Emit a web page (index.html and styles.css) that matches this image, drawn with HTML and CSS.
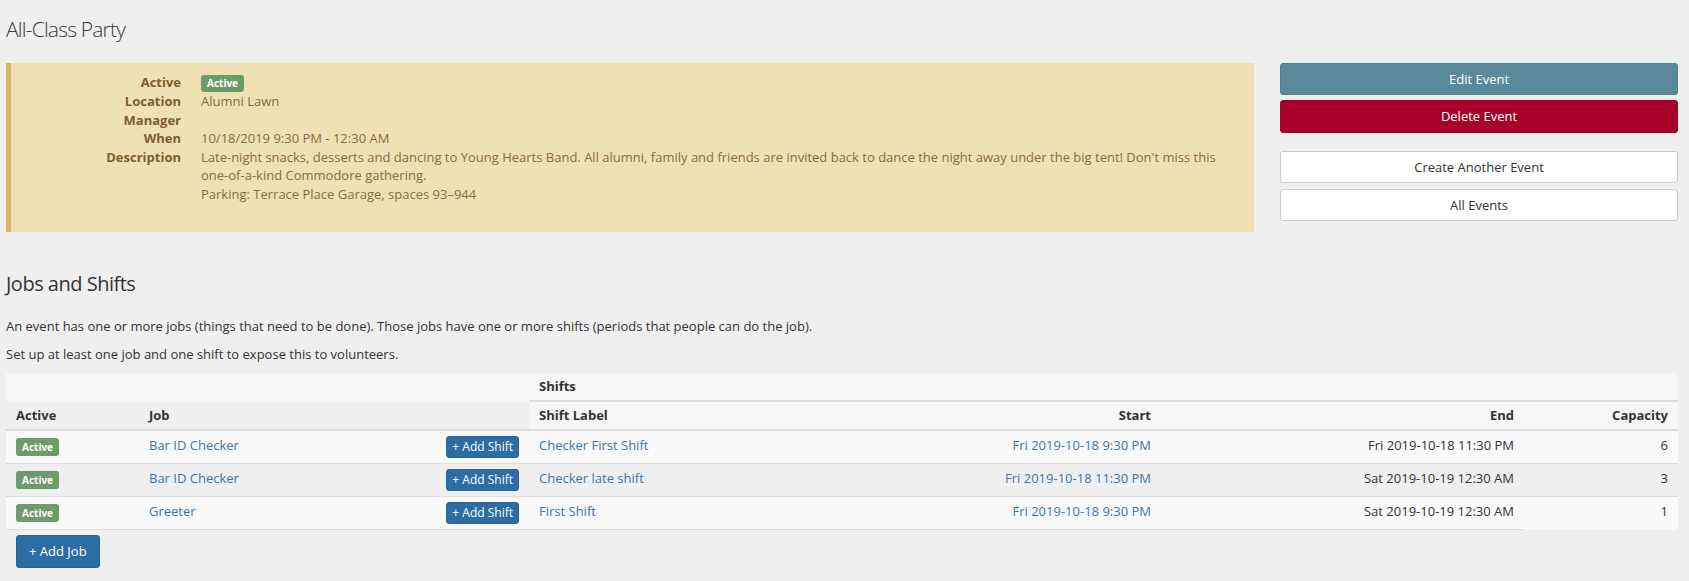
FILE: index.html
```html
<!DOCTYPE html>
<html lang="en">
<head>
<meta charset="utf-8">
<title>All-Class Party</title>
<link rel="stylesheet" href="styles.css">
</head>
<body>
<div class="page">
  <h1 class="title">All-Class Party</h1>

  <div class="top">
    <div class="callout">
      <dl class="details">
        <dt>Active</dt>
        <dd><span class="badge badge-panel">Active</span></dd>
        <dt>Location</dt>
        <dd>Alumni Lawn</dd>
        <dt>Manager</dt>
        <dd></dd>
        <dt>When</dt>
        <dd>10/18/2019 9:30 PM - 12:30 AM</dd>
        <dt>Description</dt>
        <dd>Late-night snacks, desserts and dancing to Young Hearts Band. All alumni, family and friends are invited back to dance the night away under the big tent! Don't miss this <span class="nowrap">one-of-a-kind</span> Commodore gathering.<br>Parking: Terrace Place Garage, spaces 93–944</dd>
      </dl>
    </div>

    <div class="actions">
      <a class="btn btn-block btn-edit" href="#">Edit Event</a>
      <a class="btn btn-block btn-delete" href="#">Delete Event</a>
      <a class="btn btn-block btn-default btn-create" href="#">Create Another Event</a>
      <a class="btn btn-block btn-default btn-all" href="#">All Events</a>
    </div>
  </div>

  <h2 class="section-title">Jobs and Shifts</h2>
  <p class="intro">An event has one or more jobs (things that need to be done). Those jobs have one or more shifts (periods that people can do the job).</p>
  <p class="intro intro-last">Set up at least one job and one shift to expose this to volunteers.</p>

  <table class="jobs">
    <colgroup>
      <col class="c-active">
      <col class="c-job">
      <col class="c-label">
      <col class="c-start">
      <col class="c-end">
      <col class="c-cap">
    </colgroup>
    <thead>
      <tr class="head-top">
        <th colspan="2" class="blank"></th>
        <th colspan="4" class="shifts-group">Shifts</th>
      </tr>
      <tr class="head-cols">
        <th>Active</th>
        <th>Job</th>
        <th class="shift-head">Shift Label</th>
        <th class="shift-head num">Start</th>
        <th class="shift-head num">End</th>
        <th class="shift-head num">Capacity</th>
      </tr>
    </thead>
    <tbody>
      <tr class="odd">
        <td><span class="badge">Active</span></td>
        <td><div class="job-cell"><a href="#">Bar ID Checker</a><a class="btn btn-primary btn-xs" href="#">+ Add Shift</a></div></td>
        <td><a href="#">Checker First Shift</a></td>
        <td class="num"><a href="#">Fri 2019-10-18 9:30 PM</a></td>
        <td class="num">Fri 2019-10-18 11:30 PM</td>
        <td class="num">6</td>
      </tr>
      <tr class="even">
        <td><span class="badge">Active</span></td>
        <td><div class="job-cell"><a href="#">Bar ID Checker</a><a class="btn btn-primary btn-xs" href="#">+ Add Shift</a></div></td>
        <td><a href="#">Checker late shift</a></td>
        <td class="num"><a href="#">Fri 2019-10-18 11:30 PM</a></td>
        <td class="num">Sat 2019-10-19 12:30 AM</td>
        <td class="num">3</td>
      </tr>
      <tr class="odd last">
        <td><span class="badge">Active</span></td>
        <td><div class="job-cell"><a href="#">Greeter</a><a class="btn btn-primary btn-xs" href="#">+ Add Shift</a></div></td>
        <td><a href="#">First Shift</a></td>
        <td class="num"><a href="#">Fri 2019-10-18 9:30 PM</a></td>
        <td class="num">Sat 2019-10-19 12:30 AM</td>
        <td class="num cap-last">1</td>
      </tr>
    </tbody>
  </table>

  <a class="btn btn-primary btn-add-job" href="#">+ Add Job</a>
</div>
</body>
</html>
```

FILE: styles.css
```css
* { box-sizing: border-box; }

html, body {
  margin: 0;
  padding: 0;
}

body {
  background: #efefef;
  color: #333333;
  font-family: "Open Sans", "Noto Sans", sans-serif;
  font-size: 13px;
  line-height: 18.5px;
}

a {
  color: #3a76b2;
  text-decoration: none;
}

.page {
  padding: 0 11px 20px 6px;
}

.title {
  margin: 16px 0 21px;
  font-size: 21px;
  font-weight: 300;
  line-height: 26px;
  letter-spacing: -0.8px;
  color: #3a3a3a;
}

.top {
  display: grid;
  grid-template-columns: 1fr 398px;
  column-gap: 26px;
  align-items: start;
}

.callout {
  background: #f0e1b4;
  border-left: 5px solid #dfb466;
  padding: 10px 14px 29px 0;
  color: #8a6d3b;
  min-height: 168px;
}

.details {
  display: grid;
  grid-template-columns: 170px 1fr;
  column-gap: 20px;
  margin: 0;
}

.details dt {
  font-weight: 700;
  text-align: right;
  color: #7d5d2c;
}

.details dd {
  margin: 0;
  min-height: 18.5px;
}

.nowrap { white-space: nowrap; }

.badge {
  display: inline-block;
  vertical-align: top;
  margin-top: 2px;
  height: 18px;
  line-height: 18px;
  padding: 0 6px;
  background: #6e9b6c;
  color: #ffffff;
  font-size: 10px;
  font-weight: 700;
  border-radius: 3px;
}

.badge-panel {
  height: 17px;
  line-height: 17px;
  margin-top: 2px;
}

.actions {
  display: flex;
  flex-direction: column;
}

.btn {
  display: inline-block;
  border: 1px solid transparent;
  border-radius: 3px;
  text-align: center;
  white-space: nowrap;
}

.btn-block {
  display: block;
  height: 32px;
  line-height: 30px;
  font-size: 13px;
}

.btn-edit {
  background: #5a899c;
  border-color: #53808f;
  color: #ffffff;
}

.btn-delete {
  margin-top: 5px;
  height: 33px;
  line-height: 31px;
  background: #a8002b;
  border-color: #9c0027;
  color: #ffffff;
}

.btn-default {
  background: #ffffff;
  border-color: #cccccc;
  color: #333333;
}

.btn-create { margin-top: 18px; }
.btn-all { margin-top: 6px; }

.section-title {
  margin: 40px 0 21px;
  font-size: 20px;
  font-weight: 400;
  line-height: 24px;
  letter-spacing: -0.5px;
  color: #333333;
}

.intro {
  margin: 0 0 9px;
}

.intro-last {
  margin-bottom: 9.5px;
}

.jobs {
  width: 100%;
  table-layout: fixed;
  border-collapse: separate;
  border-spacing: 0;
}

.c-active { width: 133px; }
.c-job { width: 390px; }
.c-label { width: 300px; }
.c-start { width: 332px; }
.c-end { width: 363px; }
.c-cap { width: 154px; }

.jobs th {
  padding: 4px 10px;
  line-height: 19px;
  font-weight: 700;
  text-align: left;
  color: #333333;
}

.head-top th {
  background: #f6f6f6;
}

.head-top .shifts-group {
  border-bottom: 2px solid #dddddd;
}

.head-cols th {
  border-bottom: 2px solid #dddddd;
}

.head-cols .shift-head {
  background: #f6f6f6;
}

.jobs th.num,
.jobs td.num {
  text-align: right;
}

.jobs td {
  padding: 5px 10px;
  vertical-align: top;
  border-bottom: 1px solid #dddddd;
}

.jobs tr.odd td {
  background: #f9f9f9;
}

.jobs td.cap-last {
  border-bottom-color: transparent;
}

.job-cell {
  display: flex;
  justify-content: space-between;
  align-items: flex-start;
}

.btn-primary {
  background: #2e6da4;
  border-color: #2a6396;
  color: #ffffff;
}

.btn-xs {
  height: 22px;
  line-height: 20px;
  padding: 0 5px;
  font-size: 12px;
}

.btn-add-job {
  margin: 5px 0 0 10px;
  height: 33px;
  line-height: 31px;
  padding: 0 12px;
  font-size: 13px;
}
```
